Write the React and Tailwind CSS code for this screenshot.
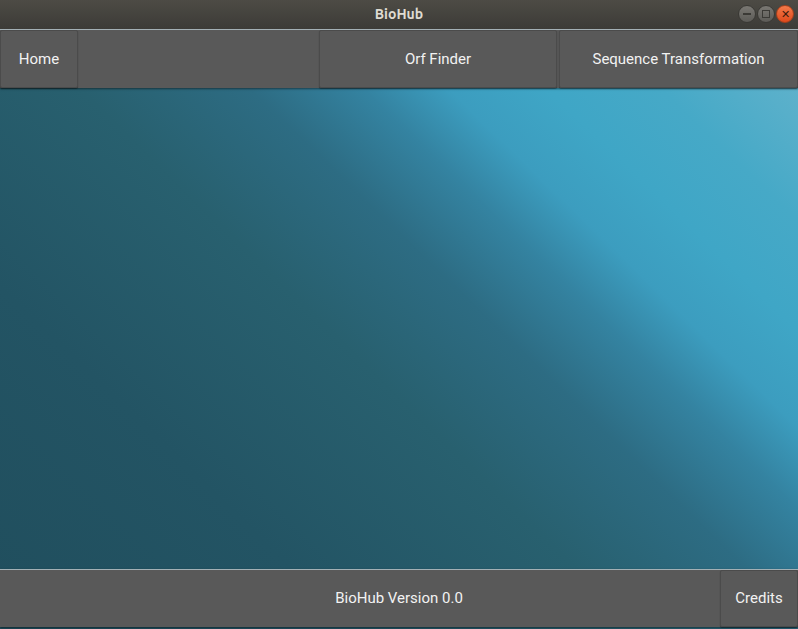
import React from "react";

const btn =
  "flex items-center justify-center bg-[#595959] border border-[#4b4b4b] shadow-[0_1px_1px_rgba(0,0,0,0.35)] rounded-[2px] text-[#f2f2f2] text-[15px]";

export default function App() {
  return (
    <div className="w-[798px] h-[629px] flex flex-col overflow-hidden font-['Roboto','Liberation_Sans',sans-serif]">
      {/* window title bar */}
      <div className="relative h-[29px] flex items-center justify-center bg-[linear-gradient(#4d4b45,#3c3b37)]">
        <span className="text-[14px] font-bold text-[#dfdbd2] font-['Ubuntu','DejaVu_Sans',sans-serif]">BioHub</span>
        <div className="absolute right-[4px] top-[5px] flex gap-[1px]">
          <div className="w-[18px] h-[18px] rounded-full bg-[linear-gradient(#7a7873,#5c5b57)] border border-[#3a3935] flex items-center justify-center">
            <div className="w-[8px] h-[1.5px] bg-[#3b3a36]" />
          </div>
          <div className="w-[18px] h-[18px] rounded-full bg-[linear-gradient(#7a7873,#5c5b57)] border border-[#3a3935] flex items-center justify-center">
            <div className="w-[8px] h-[8px] border-[1.5px] border-[#3b3a36]" />
          </div>
          <div className="w-[18px] h-[18px] rounded-full bg-[linear-gradient(#f47a4a,#df4a1c)] border border-[#a8401c] flex items-center justify-center text-[#3b1a0c] text-[11px] leading-none">
            ✕
          </div>
        </div>
      </div>

      {/* content area */}
      <div className="flex-1 flex flex-col bg-[linear-gradient(44deg,#204e5d_0%,#235464_25%,#28606f_45%,#2d6c83_57%,#3483a1_65%,#3c9dbf_71%,#3fa6c6_78%,#46a9c7_86%,#57afca_93%,#66b4cc_100%)]">
        <div className="h-[59px] flex bg-[#595959] border-t border-[#a3b0b5] shadow-[0_1px_2px_rgba(0,0,0,0.5)]">
          <button className={`${btn} w-[78px]`}>Home</button>
          <div className="flex-1" />
          <button className={`${btn} w-[238px]`}>Orf Finder</button>
          <div className="w-[2px]" />
          <button className={`${btn} w-[239px]`}>Sequence Transformation</button>
        </div>

        <div className="flex-1" />

        <div className="h-[58px] mb-[2px] flex bg-[#595959] border-t border-[#a3b0b5] shadow-[0_1px_2px_rgba(0,0,0,0.5)]">
          <div className="flex-1 pl-[78px] flex items-center justify-center text-[#f2f2f2] text-[15px]">BioHub Version 0.0</div>
          <button className={`${btn} w-[78px]`}>Credits</button>
        </div>
      </div>
    </div>
  );
}
